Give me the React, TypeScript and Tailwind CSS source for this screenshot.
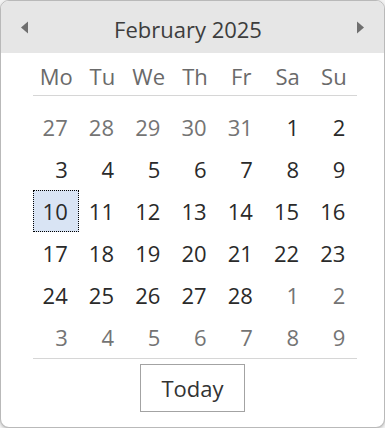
import React from "react";

type Cell = { d: number; cur: boolean };

const rows: Cell[][] = (() => {
  const all: Cell[] = [];
  [27, 28, 29, 30, 31].forEach((d) => all.push({ d, cur: false }));
  for (let d = 1; d <= 28; d++) all.push({ d, cur: true });
  for (let d = 1; d <= 9; d++) all.push({ d, cur: false });
  const out: Cell[][] = [];
  for (let i = 0; i < 6; i++) out.push(all.slice(i * 7, i * 7 + 7));
  return out;
})();

const names = ["Mo", "Tu", "We", "Th", "Fr", "Sa", "Su"];

export default function App() {
  return (
    <div
      className="w-[385px] h-[428px] bg-[#f3f3f3] overflow-hidden"
      style={{ fontFamily: '"Open Sans", "Noto Sans", sans-serif' }}
    >
      <div className="w-[385px] h-[428px] rounded-[9px] border border-[#b9b9b9] bg-white overflow-hidden flex flex-col shadow-[0_1px_3px_rgba(0,0,0,0.25)]">
        <div className="w-full h-[52px] bg-[#e6e6e6] flex items-center justify-between px-[19px] shrink-0">
          <svg width="9" height="13" viewBox="0 0 9 13">
            <path d="M8 0.5 L1 6.5 L8 12.5 Z" fill="#6f6f6f" />
          </svg>
          <div className="text-[22px] text-[#3d3d3d] leading-none pt-[3px] mr-[9px]">February 2025</div>
          <svg width="9" height="13" viewBox="0 0 9 13">
            <path d="M1 0.5 L8 6.5 L1 12.5 Z" fill="#6f6f6f" />
          </svg>
        </div>
        <div className="ml-[32px] w-[324px] grid grid-cols-7 h-[43px] border-b border-[#d6d6d6] items-center shrink-0">
          {names.map((n) => (
            <div key={n} className="text-center text-[22px] text-[#6a6a6a] leading-none pt-[4px]">
              {n}
            </div>
          ))}
        </div>
        <div className="ml-[32px] w-[324px] mt-[10px] border-b border-[#d6d6d6] shrink-0">
          {rows.map((r, i) => (
            <div key={i} className="grid grid-cols-7 h-[42px]">
              {r.map((c, j) => {
                const sel = c.cur && c.d === 10;
                return (
                  <div
                    key={j}
                    className={
                      "flex items-center justify-center pr-[2px] " +
                      (sel ? "bg-[#d9e4f4] border border-dotted border-black" : "")
                    }
                  >
                    <span
                      className={
                        "inline-block w-[2ch] text-right text-[22px] leading-none " +
                        (c.cur ? "text-[#2a2a2a]" : "text-[#747474]")
                      }
                    >
                      {c.d}
                    </span>
                  </div>
                );
              })}
            </div>
          ))}
        </div>
        <div className="self-center mt-[5px] w-[105px] h-[48px] border border-[#a3a3a3] flex items-center justify-center text-[22px] text-[#333333] shrink-0">
          Today
        </div>
      </div>
    </div>
  );
}
